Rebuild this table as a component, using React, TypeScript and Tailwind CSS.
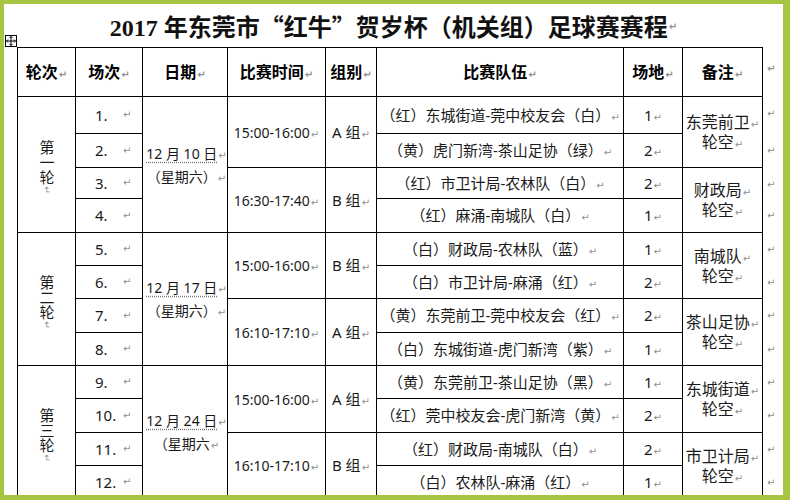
import React from 'react';

type Match = { no: string; team: string; field: string };
type Slot = { time: string; group: string; remark: string; matches: Match[] };
type Round = { label: string; date: string; week: string; slots: Slot[]; heights: number[] };

const rounds: Round[] = [
  {
    label: '第一轮',
    date: '12 月 10 日',
    week: '（星期六）',
    heights: [37, 34, 31, 34],
    slots: [
      {
        time: '15:00-16:00', group: 'A 组', remark: '东莞前卫',
        matches: [
          { no: '1.', team: '（红）东城街道-莞中校友会（白）', field: '1' },
          { no: '2.', team: '（黄）虎门新湾-茶山足协（绿）', field: '2' },
        ],
      },
      {
        time: '16:30-17:40', group: 'B 组', remark: '财政局',
        matches: [
          { no: '3.', team: '（红）市卫计局-农林队（白）', field: '2' },
          { no: '4.', team: '（红）麻涌-南城队（白）', field: '1' },
        ],
      },
    ],
  },
  {
    label: '第二轮',
    date: '12 月 17 日',
    week: '（星期六）',
    heights: [33, 33, 34, 33],
    slots: [
      {
        time: '15:00-16:00', group: 'B 组', remark: '南城队',
        matches: [
          { no: '5.', team: '（白）财政局-农林队（蓝）', field: '1' },
          { no: '6.', team: '（白）市卫计局-麻涌（红）', field: '2' },
        ],
      },
      {
        time: '16:10-17:10', group: 'A 组', remark: '茶山足协',
        matches: [
          { no: '7.', team: '（黄）东莞前卫-莞中校友会（红）', field: '2' },
          { no: '8.', team: '（白）东城街道-虎门新湾（紫）', field: '1' },
        ],
      },
    ],
  },
  {
    label: '第三轮',
    date: '12 月 24 日',
    week: '（星期六',
    heights: [33, 34, 33, 33],
    slots: [
      {
        time: '15:00-16:00', group: 'A 组', remark: '东城街道',
        matches: [
          { no: '9.', team: '（黄）东莞前卫-茶山足协（黑）', field: '1' },
          { no: '10.', team: '（红）莞中校友会-虎门新湾（黄）', field: '2' },
        ],
      },
      {
        time: '16:10-17:10', group: 'B 组', remark: '市卫计局',
        matches: [
          { no: '11.', team: '（红）财政局-南城队（白）', field: '2' },
          { no: '12.', team: '（白）农林队-麻涌（红）', field: '1' },
        ],
      },
    ],
  },
];

// paragraph mark, as Word shows it
const M = () => (
  <span className="ml-[1px] text-[10px] leading-none text-[#8f8f8f] font-['DejaVu_Sans',sans-serif]">↵</span>
);

const cell = 'border border-black p-0 text-center align-middle whitespace-nowrap';

const App: React.FC = () => {
  return (
    <div className="w-[790px] h-[500px] overflow-hidden bg-[#a6c641] pl-[4px] pt-[4px] pr-[7px] pb-[5px]">
      <div className="h-full bg-white overflow-hidden text-[#1a1a1a] font-['Noto_Sans','Noto_Sans_CJK_SC',sans-serif]">
        <div className="h-[43px] flex items-center justify-center pt-[2px] text-[24px] font-bold text-[#111] font-['Liberation_Serif','Noto_Sans_CJK_SC',serif]">
          <span>
            2017 年东莞市<span className="font-['Noto_Sans_CJK_SC',sans-serif]">“</span>红牛
            <span className="font-['Noto_Sans_CJK_SC',sans-serif]">”</span>贺岁杯（机关组）足球赛赛程
          </span>
          <M />
        </div>

        <div className="relative ml-[13px]">
          {/* table move handle */}
          <div className="absolute -left-[12px] -top-[12px] w-[12px] h-[12px] border border-black bg-white flex items-center justify-center">
            <svg width="10" height="10" viewBox="0 0 10 10" fill="none" stroke="#000" strokeWidth="1">
              <path d="M5 0.5v9M0.5 5h9" />
              <path d="M3.5 2L5 0.5L6.5 2M3.5 8L5 9.5L6.5 8M2 3.5L0.5 5L2 6.5M8 3.5L9.5 5L8 6.5" />
            </svg>
          </div>

          <table className="table-fixed border-collapse w-[765px]">
            <colgroup>
              <col className="w-[58px]" />
              <col className="w-[67px]" />
              <col className="w-[85px]" />
              <col className="w-[98px]" />
              <col className="w-[51px]" />
              <col className="w-[247px]" />
              <col className="w-[59px]" />
              <col className="w-[80px]" />
              <col className="w-[20px]" />
            </colgroup>
            <thead>
              <tr className="h-[49px] text-[16px] font-bold text-black">
                <td className={cell}>轮次<M /></td>
                <td className={cell}>场次<M /></td>
                <td className={cell}>日期<M /></td>
                <td className={cell}>比赛时间<M /></td>
                <td className={cell}>组别<M /></td>
                <td className={cell}>比赛队伍<M /></td>
                <td className={cell}>场地<M /></td>
                <td className={cell}>备注<M /></td>
                <td className="p-0 pl-[3px] pt-[6px] align-top"><M /></td>
              </tr>
            </thead>
            <tbody className="text-[15px]">
              {rounds.map((r) =>
                r.slots.flatMap((s, si) =>
                  s.matches.map((m, mi) => {
                    const idx = si * 2 + mi;
                    return (
                      <tr key={m.no} style={{ height: r.heights[idx] }}>
                        {idx === 0 && (
                          <td rowSpan={4} className={cell}>
                            <div className="flex flex-col items-center pt-[6px]">
                              <span className="[writing-mode:vertical-rl] [text-orientation:upright] leading-[18px] font-['Noto_Sans_CJK_SC',sans-serif]">
                                {r.label}
                              </span>
                              <span className="rotate-90 text-[9px] leading-[10px] text-[#8f8f8f] font-['DejaVu_Sans',sans-serif]">↵</span>
                            </div>
                          </td>
                        )}
                        <td className={cell + ' text-left'}>
                          <div className="flex items-center pl-[19px]">
                            <span className="w-[27px]">{m.no}</span>
                            <M />
                          </div>
                        </td>
                        {idx === 0 && (
                          <td rowSpan={4} className={cell}>
                            <div className="flex flex-col items-center leading-[23px] pl-[3px] text-[14px]">
                              <div>
                                <span className="underline decoration-dotted decoration-[#777] underline-offset-[3px]">{r.date}</span>
                                <M />
                              </div>
                              <div>
                                {r.week}
                                <M />
                              </div>
                            </div>
                          </td>
                        )}
                        {mi === 0 && (
                          <td rowSpan={2} className={cell + ' text-[14px]'}>
                            {s.time}
                            <M />
                          </td>
                        )}
                        {mi === 0 && (
                          <td rowSpan={2} className={cell}>
                            {s.group}
                            <M />
                          </td>
                        )}
                        <td className={cell}>
                          {m.team}
                          <M />
                        </td>
                        <td className={cell}>
                          {m.field}
                          <M />
                        </td>
                        {mi === 0 && (
                          <td rowSpan={2} className={cell}>
                            <div className="flex flex-col items-center leading-[20px] text-[16px]">
                              <div>
                                {s.remark}
                                <M />
                              </div>
                              <div>
                                轮空
                                <M />
                              </div>
                            </div>
                          </td>
                        )}
                        <td className="p-0 pl-[3px] pt-[3px] align-top">
                          <M />
                        </td>
                      </tr>
                    );
                  })
                )
              )}
            </tbody>
          </table>
        </div>
      </div>
    </div>
  );
};

export default App;
